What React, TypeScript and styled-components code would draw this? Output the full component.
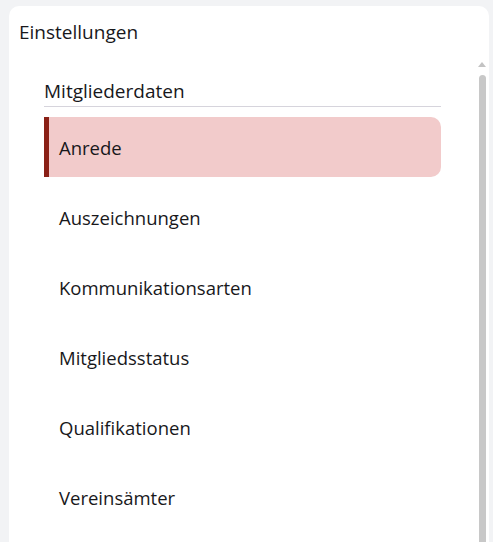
import React from "react";
import styled, { createGlobalStyle } from "styled-components";

const Global = createGlobalStyle`
  html, body { margin: 0; padding: 0; background: #f2f3f5; height: 100%; overflow: hidden; }
  body { font-family: "Open Sans", "Noto Sans", sans-serif; color: #18181b; }
`;

const Page = styled.div`
  padding: 6px 4px 0 9px;
  height: 542px;
  box-sizing: border-box;
  display: flex;
`;

const Card = styled.div`
  flex: 1;
  background: #ffffff;
  border-radius: 10px 10px 0 0;
  display: flex;
  flex-direction: column;
  overflow: hidden;
`;

const Title = styled.div`
  font-size: 19px;
  line-height: 26px;
  padding: 13px 0 0 10px;
  height: 39px;
  box-sizing: border-box;
`;

const Body = styled.div`
  flex: 1;
  display: flex;
  min-height: 0;
`;

const Content = styled.div`
  flex: 1;
  padding: 33px 37px 0 35px;
  display: flex;
  flex-direction: column;
`;

const SectionHeader = styled.div`
  font-size: 19px;
  line-height: 26px;
  padding-bottom: 2px;
  border-bottom: 1px solid #d6d4dc;
  margin-bottom: 10px;
`;

const List = styled.div`
  display: flex;
  flex-direction: column;
  gap: 10px;
`;

const Item = styled.div<{ $active?: boolean }>`
  height: 60px;
  display: flex;
  align-items: center;
  padding-left: ${(p) => (p.$active ? "10px" : "15px")};
  font-size: 18.5px;
  border-left: ${(p) => (p.$active ? "5px solid #8a2016" : "none")};
  background: ${(p) => (p.$active ? "#f2cbcb" : "transparent")};
  border-radius: 0 10px 10px 0;
`;

const ScrollTrack = styled.div`
  width: 8px;
  margin-right: 3px;
  padding-top: 17px;
  display: flex;
  flex-direction: column;
  align-items: center;
`;

const Arrow = styled.div`
  width: 0;
  height: 0;
  border-left: 4px solid transparent;
  border-right: 4px solid transparent;
  border-bottom: 5px solid #c3c3c3;
  margin-bottom: 8px;
`;

const Thumb = styled.div`
  width: 7px;
  flex: 1;
  background: #c8c8c8;
  border-radius: 4px 4px 0 0;
`;

const items = [
  "Anrede",
  "Auszeichnungen",
  "Kommunikationsarten",
  "Mitgliedsstatus",
  "Qualifikationen",
  "Vereinsämter",
];

export default function App() {
  return (
    <>
      <Global />
      <Page>
        <Card>
          <Title>Einstellungen</Title>
          <Body>
            <Content>
              <SectionHeader>Mitgliederdaten</SectionHeader>
              <List>
                {items.map((it, i) => (
                  <Item key={it} $active={i === 0}>
                    {it}
                  </Item>
                ))}
              </List>
            </Content>
            <ScrollTrack>
              <Arrow />
              <Thumb />
            </ScrollTrack>
          </Body>
        </Card>
      </Page>
    </>
  );
}
